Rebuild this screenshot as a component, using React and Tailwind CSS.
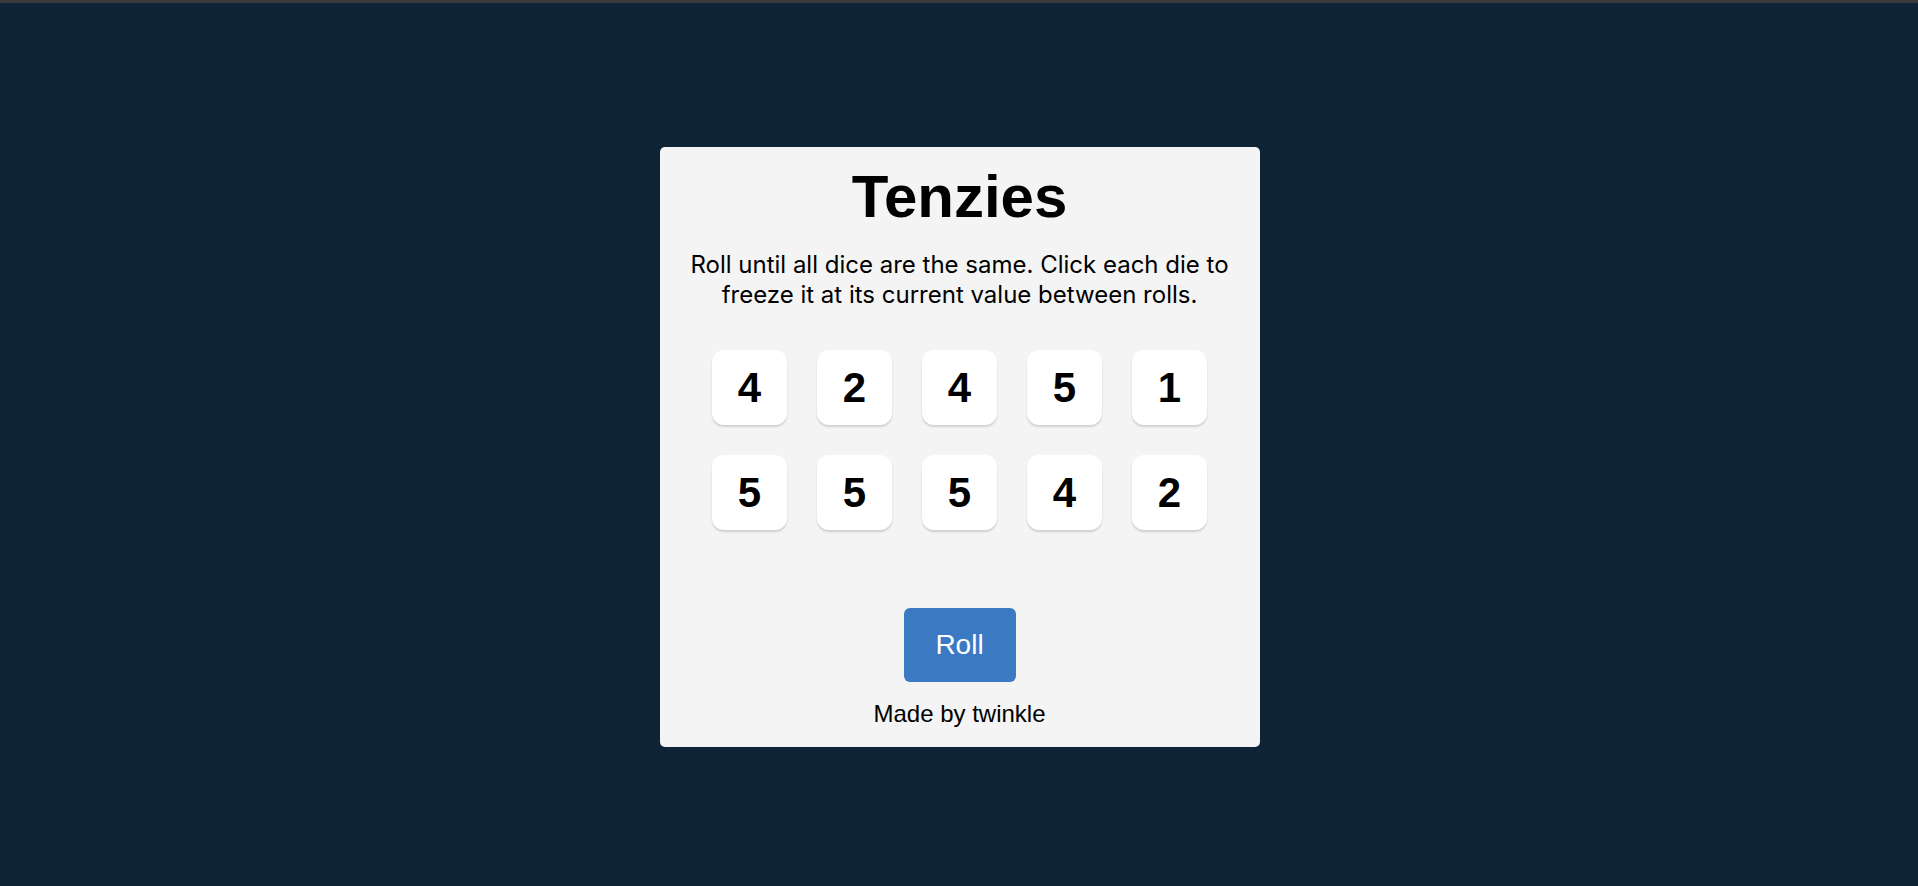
import React, { useState } from 'react';

// starting values shown on the board
const initialDice = [4, 2, 4, 5, 1, 5, 5, 5, 4, 2];

function Die({ value, held, onHold }) {
    return (
        <button
            onClick={onHold}
            className={`w-[75px] h-[75px] rounded-[12px] flex items-center justify-center shadow-[0_2px_2px_rgba(0,0,0,0.15)] font-['Liberation_Sans',Arial,sans-serif] font-bold text-[42px] leading-none text-black ${
                held ? 'bg-[#59e391]' : 'bg-white'
            }`}
        >
            {value}
        </button>
    );
}

export default function App() {
    const [dice, setDice] = useState(
        initialDice.map((value, i) => ({ id: i, value, held: false }))
    );

    // Roll every die that is not frozen
    const rollDice = () => {
        setDice(old =>
            old.map(die =>
                die.held ? die : { ...die, value: Math.ceil(Math.random() * 6) }
            )
        );
    };

    const holdDie = (id) => {
        setDice(old => old.map(die => (die.id === id ? { ...die, held: !die.held } : die)));
    };

    return (
        <div className="min-h-screen bg-[#0f2336]">
            <div className="h-[3px] bg-[#3a3a3a]" />
            <div className="flex justify-center pt-[144px] pl-[1px]">
                <main className="w-[600px] h-[600px] bg-[#f4f4f4] rounded-[5px] flex flex-col items-center pt-[20px] pb-[18px]">
                    <h1 className="font-['Liberation_Sans',Arial,sans-serif] font-bold text-[60px] leading-none text-black">
                        Tenzies
                    </h1>
                    <p className="mt-[23px] w-[560px] text-center font-['Inter',sans-serif] text-[24px] leading-[30px] text-black">
                        Roll until all dice are the same. Click each die to freeze it at its current value between rolls.
                    </p>

                    {/* Dice board */}
                    <div className="mt-[40px] grid grid-cols-5 gap-[30px]">
                        {dice.map(die => (
                            <Die key={die.id} value={die.value} held={die.held} onHold={() => holdDie(die.id)} />
                        ))}
                    </div>

                    <button
                        onClick={rollDice}
                        className="mt-[78px] w-[112px] h-[74px] rounded-[6px] bg-[#3b79c3] text-white font-['Liberation_Sans',Arial,sans-serif] text-[28px] leading-none"
                    >
                        Roll
                    </button>
                    <p className="mt-[18px] font-['Liberation_Sans',Arial,sans-serif] text-[24px] leading-[28px] text-black">
                        Made by twinkle
                    </p>
                </main>
            </div>
        </div>
    );
}
